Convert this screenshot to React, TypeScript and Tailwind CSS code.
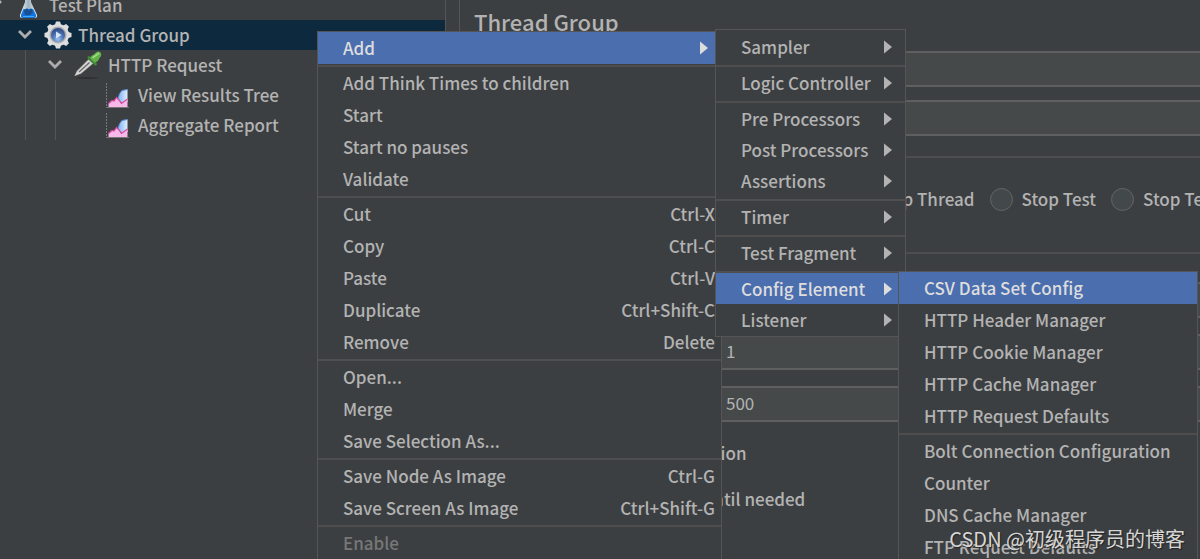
import { ReactNode } from "react";

type Item = {
  label?: string;
  keys?: string;
  sub?: boolean;
  active?: boolean;
  off?: boolean;
};

const mainItems: Item[] = [
  { label: "Add", sub: true, active: true },
  {},
  { label: "Add Think Times to children" },
  { label: "Start" },
  { label: "Start no pauses" },
  { label: "Validate" },
  {},
  { label: "Cut", keys: "Ctrl-X" },
  { label: "Copy", keys: "Ctrl-C" },
  { label: "Paste", keys: "Ctrl-V" },
  { label: "Duplicate", keys: "Ctrl+Shift-C" },
  { label: "Remove", keys: "Delete" },
  {},
  { label: "Open..." },
  { label: "Merge" },
  { label: "Save Selection As..." },
  {},
  { label: "Save Node As Image", keys: "Ctrl-G" },
  { label: "Save Screen As Image", keys: "Ctrl+Shift-G" },
  {},
  { label: "Enable", off: true },
];

const addItems: Item[] = [
  { label: "Sampler", sub: true },
  {},
  { label: "Logic Controller", sub: true },
  {},
  { label: "Pre Processors", sub: true },
  { label: "Post Processors", sub: true },
  { label: "Assertions", sub: true },
  {},
  { label: "Timer", sub: true },
  {},
  { label: "Test Fragment", sub: true },
  {},
  { label: "Config Element", sub: true, active: true },
  { label: "Listener", sub: true },
];

const configItems: Item[] = [
  { label: "CSV Data Set Config", active: true },
  { label: "HTTP Header Manager" },
  { label: "HTTP Cookie Manager" },
  { label: "HTTP Cache Manager" },
  { label: "HTTP Request Defaults" },
  {},
  { label: "Bolt Connection Configuration" },
  { label: "Counter" },
  { label: "DNS Cache Manager" },
  { label: "FTP Request Defaults" },
];

function Menu({
  items,
  className,
  rowClass = "h-8 pb-px",
  sepClass = "pt-px",
}: {
  items: Item[];
  className: string;
  rowClass?: string;
  sepClass?: string;
}) {
  return (
    <div
      role="menu"
      className={`absolute border border-[#555555] bg-[#3c3f41] ${className}`}>
      {items.map((item, i) =>
        item.label ? (
          <button
            key={i}
            role="menuitem"
            disabled={item.off}
            className={`flex w-full items-center justify-between whitespace-nowrap pl-[25px] ${rowClass} ${
              item.sub ? "pr-[13px]" : "pr-1.5"
            } ${item.active ? "bg-[#4b6eaf] text-[#dddddd]" : ""} ${
              item.off ? "text-[#777777]" : ""
            }`}>
            <span>{item.label}</span>
            {item.keys && <span>{item.keys}</span>}
            {item.sub && (
              <svg width="8" height="14" viewBox="0 0 8 14" fill="currentColor">
                <path d="M0 0.5L8 7L0 13.5Z" />
              </svg>
            )}
          </button>
        ) : (
          <div key={i} role="separator" className={sepClass}>
            <div className="h-0.5 bg-[#4e4e4f]" />
          </div>
        )
      )}
    </div>
  );
}

function Chevron() {
  return (
    <svg width="14" height="12" viewBox="0 0 14 12" className="shrink-0">
      <path
        d="M1 2L7 8L13 2"
        fill="none"
        stroke="#adadad"
        strokeWidth="2.8"
      />
    </svg>
  );
}

function Flask() {
  return (
    <svg width="20" height="30" viewBox="0 0 20 30" className="shrink-0">
      <defs>
        <linearGradient id="glass">
          <stop offset="0" stopColor="#f2f6f8" />
          <stop offset="0.5" stopColor="#9fb3c0" />
          <stop offset="1" stopColor="#e6edf1" />
        </linearGradient>
      </defs>
      <path d="M6 2H12V12L18 25Q18.500 28 16 28H3Q0.500 28 1 25L6 12Z" fill="url(#glass)" />
      <path d="M4.500 19H14L17 25Q17.500 28 15 28H4Q1.500 28 2 25Z" fill="#0f74de" />
      <path d="M5 21L8 18L10 21L12 18L14 22L11 25H6Z" fill="#1a4f92" />
      <path d="M4 26.500H15" stroke="#4aa8f5" />
    </svg>
  );
}

function Gear() {
  return (
    <svg width="28" height="28" viewBox="0 0 28 28" className="shrink-0">
      <defs>
        <radialGradient id="gear" cx="0.5" cy="0.8" r="0.8">
          <stop offset="0" stopColor="#9cc0ec" />
          <stop offset="0.5" stopColor="#4c74b4" />
          <stop offset="1" stopColor="#2a4580" />
        </radialGradient>
      </defs>
      <g fill="#dedede">
        <circle cx="14" cy="14" r="11" />
        {[0, 45, 90, 135].map((a) => (
          <path
            key={a}
            d="M10.500 5L12 0.500H16L17.500 5V23L16 27.500H12L10.500 23Z"
            transform={`rotate(${a} 14 14)`}
          />
        ))}
      </g>
      <circle cx="14" cy="14" r="8.500" fill="#a9adb3" />
      <circle cx="14" cy="14" r="7" fill="url(#gear)" />
      <path d="M12 10.500L17.500 14L12 17.500Z" fill="#d9e6f8" />
    </svg>
  );
}

function Dropper() {
  return (
    <svg width="28" height="28" viewBox="0 0 28 28" className="shrink-0">
      <ellipse cx="13" cy="27" rx="11" ry="1" fill="#2f3132" />
      <path d="M0 25.500L2 19.500L14 7.500L20 12.500L7.500 23.500Z" fill="#4a4a4a" />
      <path d="M0.500 25L3 20L14.500 8.500L19 12.500L7 22.500Z" fill="#d4d4d4" />
      <path d="M5 21L15.500 11.500" stroke="#6a6a6a" strokeWidth="1.300" />
      <path d="M15 6.500L21.500 13" stroke="#3f8a34" strokeWidth="3" strokeLinecap="round" />
      <path d="M16 7Q17 4 20 3.500Q23 -1 26 1Q29 3.500 25.500 7Q24 11 20.500 11.500Z" fill="#62b048" />
      <path d="M19 6.500L24.500 2.500" stroke="#9bd882" strokeWidth="1.800" strokeLinecap="round" />
    </svg>
  );
}

function Chart() {
  return (
    <svg width="24" height="26" viewBox="0 0 24 26" className="shrink-0">
      <defs>
        <linearGradient id="area">
          <stop offset="0" stopColor="#7fb2f2" />
          <stop offset="1" stopColor="#e0effd" />
        </linearGradient>
      </defs>
      <path d="M0.500 1V25" stroke="#777777" strokeDasharray="2 1" />
      <path d="M0 25.500H23" stroke="#777777" />
      <path d="M12 17Q13 11 16 8.500L21.500 7.500V20L17 22Z" fill="url(#area)" />
      <path d="M12 17Q13 11 16 8.500L21.500 7.500" stroke="#5d8fe2" fill="none" />
      <path d="M2.500 25V21.500L6 18.500L8 19L10.500 15.500L13 18L15.500 21.500L21.500 17V25Z" fill="#f8b8ea" />
      <path
        d="M2.500 21.500L6 18.500L8 19L10.500 15.500L13 18L15.500 21.500L21.500 17"
        stroke="#d8489c"
        fill="none"
        strokeWidth="1.200"
      />
    </svg>
  );
}

function TreeRow({
  className,
  children,
}: {
  className: string;
  children: ReactNode;
}) {
  return <li className={`flex h-[30px] items-center ${className}`}>{children}</li>;
}

function Field({ label, id, value }: { label: string; id: string; value?: string }) {
  return (
    <div className="flex items-center">
      <label htmlFor={id} className="w-[246px] shrink-0 whitespace-nowrap">
        {label}
      </label>
      <input
        id={id}
        defaultValue={value}
        className="h-9 min-w-0 flex-1 border-2 border-[#5e6060] bg-[#45494a] px-1 pb-[3px] font-normal"
      />
    </div>
  );
}

function Radio({ label }: { label: string }) {
  return (
    <label className="flex shrink-0 items-center gap-[9px] whitespace-nowrap">
      <input
        type="radio"
        name="action"
        className="size-[23px] appearance-none rounded-full border border-[#646464] bg-[#43494a]"
      />
      {label}
    </label>
  );
}

function Check({ label }: { label: string }) {
  return (
    <label className="flex items-center gap-[9px] pl-[15px]">
      <input
        type="checkbox"
        className="size-[23px] appearance-none border border-[#646464] bg-[#43494a]"
      />
      {label}
    </label>
  );
}

export default function App() {
  return (
    <div className="relative flex h-screen overflow-hidden bg-[#3c3f41] font-['Noto_Sans_CJK_SC',sans-serif] text-[17px] leading-6 font-medium text-[#b3b3b3]">
      <nav className="w-[446px] shrink-0 border-r border-[#555555]">
        <ul className="-mt-[10px]">
          <TreeRow className="-ml-3 gap-[17px]">
            <Chevron />
            <span className="flex items-center gap-2.5">
              <Flask />
              Test Plan
            </span>
          </TreeRow>
          <TreeRow className="gap-1.5 bg-[#0d293e] pl-[18px]">
            <Chevron />
            <span className="flex items-center gap-1.5 pl-1.5">
              <Gear />
              Thread Group
            </span>
          </TreeRow>
          <li className="ml-[25px] border-l border-[#555555]">
            <ul>
              <TreeRow className="gap-1.5 pl-[22px]">
                <Chevron />
                <span className="flex items-center gap-1.5 pl-1.5">
                  <Dropper />
                  HTTP Request
                </span>
              </TreeRow>
              <li className="ml-[29px] border-l border-[#555555]">
                <ul>
                  <TreeRow className="gap-2 pl-[50px]">
                    <Chart />
                    View Results Tree
                  </TreeRow>
                  <TreeRow className="gap-2 pl-[50px]">
                    <Chart />
                    Aggregate Report
                  </TreeRow>
                </ul>
              </li>
            </ul>
          </li>
        </ul>
      </nav>

      <main className="ml-[13px] min-w-0 flex-1 border-l border-[#555555] pl-[14px]">
        <h1 className="pt-[5px] text-[22px] leading-8">Thread Group</h1>
        <div className="mt-[14px] -mr-2 flex flex-col gap-[13px]">
          <Field label="Name:" id="name" value="Thread Group" />
          <Field label="Comments:" id="comments" />
        </div>

        <fieldset className="mt-5 -mr-2 flex h-[98px] items-center justify-start gap-[15px] border-2 border-[#4e4e4f] pb-3 pl-[134px]">
          <Radio label="Start Next Thread Loop" />
          <Radio label="Stop Thread" />
          <Radio label="Stop Test" />
          <Radio label="Stop Test Now" />
        </fieldset>

        <div className="mt-7 -mr-2 flex flex-col gap-4">
          <Field label="Number of Threads (users):" id="threads" value="1" />
          <Field label="Ramp-up period (seconds):" id="ramp" value="1" />
          <Field label="Loop Count:" id="loops" value="500" />
        </div>
        <div className="mt-[19px] flex flex-col gap-[22px]">
          <Check label="Same user on each iteration" />
          <Check label="Delay Thread creation until needed" />
        </div>
      </main>

      <Menu items={mainItems} className="top-[31px] left-[317px] w-[405px]" />
      <Menu
        items={addItems}
        className="top-[29px] left-[715px] w-[191px] py-px"
        rowClass="h-[31px]"
        sepClass="pt-[3px]"
      />
      <Menu items={configItems} className="top-[271px] left-[898px] w-[300px]" />

      <p className="absolute right-[15px] bottom-1 text-xl leading-8 font-normal text-[#d6d6d6] [text-shadow:1px_1px_1px_#222222]">
        CSDN @初级程序员的博客
      </p>
    </div>
  );
}
